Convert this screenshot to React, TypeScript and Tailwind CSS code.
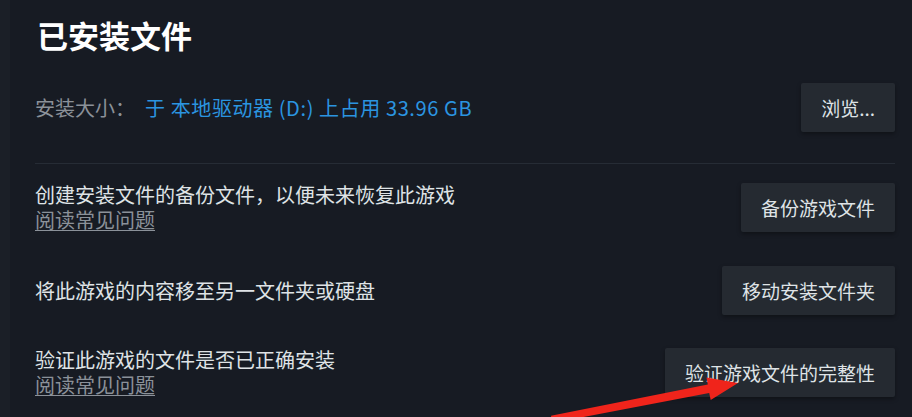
const font = "font-['Noto_Sans_CJK_SC','Noto_Sans',sans-serif]";

function ActionButton({ label }: { label: string }) {
  return (
    <button className="h-[49px] shrink-0 rounded-[2px] bg-[#252a31] px-5 text-[19px] leading-none text-[#dfe3e6] shadow-[0_2px_4px_rgba(0,0,0,0.35)]">
      {label}
    </button>
  );
}

function OptionRow({ text, link, button, className }: { text: string; link?: boolean; button: string; className?: string }) {
  return (
    <div className={`flex items-center justify-between ${className ?? ""}`}>
      <div className="flex flex-col">
        <span className="text-[20px] leading-[26px] text-[#dfe3e6]">{text}</span>
        {link && (
          <a className="-mt-px text-[20px] leading-[26px] text-[#8b9199] underline underline-offset-2 decoration-1">
            阅读常见问题
          </a>
        )}
      </div>
      <ActionButton label={button} />
    </div>
  );
}

export default function App() {
  return (
    <div className={`relative h-[417px] w-[912px] overflow-hidden bg-[#171b23] ${font}`}>
      <div className="absolute left-0 top-0 h-full w-[10px] bg-[#1b1f27]" />

      <div className="pl-[35px] pr-[17px] pt-[15px]">
        {/* Header */}
        <h1 className="pl-[2px] text-[31px] font-bold leading-[40px] text-white">已安装文件</h1>

        <div className="mt-[28px] flex items-center justify-between">
          <div className="flex items-center text-[20px]">
            <span className="text-[#8b9199]">安装大小：</span>
            <span className="ml-[10px] tracking-[0.6px] text-[#2b95e0]">于 本地驱动器 (D:) 上占用 33.96 GB</span>
          </div>
          <ActionButton label="浏览..." />
        </div>

        <div className="mt-[31px] border-t border-[#262c35]" />

        {/* Options */}
        <div className="mt-[18px] flex flex-col">
          <OptionRow text="创建安装文件的备份文件，以便未来恢复此游戏" link button="备份游戏文件" />
          <OptionRow className="mt-[33px]" text="将此游戏的内容移至另一文件夹或硬盘" button="移动安装文件夹" />
          <OptionRow className="mt-[32px]" text="验证此游戏的文件是否已正确安装" link button="验证游戏文件的完整性" />
        </div>
      </div>

      {/* Red annotation arrow */}
      <svg className="pointer-events-none absolute left-0 top-0" width="912" height="417" viewBox="0 0 912 417">
        <polygon
          fill="#f0241b"
          points="738,383 710.7,400 709.2,393 552.2,423 551,415.8 707.8,384.6 706.5,377.4"
        />
      </svg>
    </div>
  );
}
